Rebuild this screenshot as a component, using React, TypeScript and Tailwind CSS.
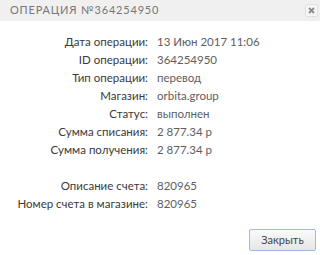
const rows: [string, string][] = [
  ["Дата операции:", "13 Июн 2017 11:06"],
  ["ID операции:", "364254950"],
  ["Тип операции:", "перевод"],
  ["Магазин:", "orbita.group"],
  ["Статус:", "выполнен"],
  ["Сумма списания:", "2 877.34 р"],
  ["Сумма получения:", "2 877.34 р"],
  ["", ""],
  ["Описание счета:", "820965"],
  ["Номер счета в магазине:", "820965"],
];

export default function App() {
  return (
    <div className="w-[320px] h-[255px] bg-white overflow-hidden font-['Lato','Liberation_Sans',sans-serif]">
      <div className="h-[21px] bg-[#f0f0f0] flex items-center justify-between pl-[10px] pr-[2px]">
        <span className="text-[11px] tracking-[0.8px] text-[#777] uppercase">Операция №364254950</span>
        <button className="w-[13px] h-[13px] rounded-[2px] border border-[#e0e0e0] bg-[#f6f6f6] flex items-center justify-center">
          <svg width="7" height="7" viewBox="0 0 7 7">
            <path d="M1 1L6 6M6 1L1 6" stroke="#8a8a8a" strokeWidth="1.8" />
          </svg>
        </button>
      </div>
      <div className="grid grid-cols-[148px_1fr] gap-x-[9px] pt-[12px] text-[11.5px] leading-[18px]">
        {rows.map(([label, value], i) => (
          <div key={i} className="contents">
            <div className="text-right text-[#3a3a3a] h-[18px]">{label}</div>
            <div className="text-[#5e5e5e] h-[18px]">{value}</div>
          </div>
        ))}
      </div>
      <div className="flex justify-end pr-[4px] pt-[16px]">
        <button className="w-[67px] h-[22px] border border-[#9dbde6] rounded-[2px] bg-gradient-to-b from-[#fafafa] to-[#e6e6e6] text-[11px] text-[#444]">
          Закрыть
        </button>
      </div>
    </div>
  );
}
